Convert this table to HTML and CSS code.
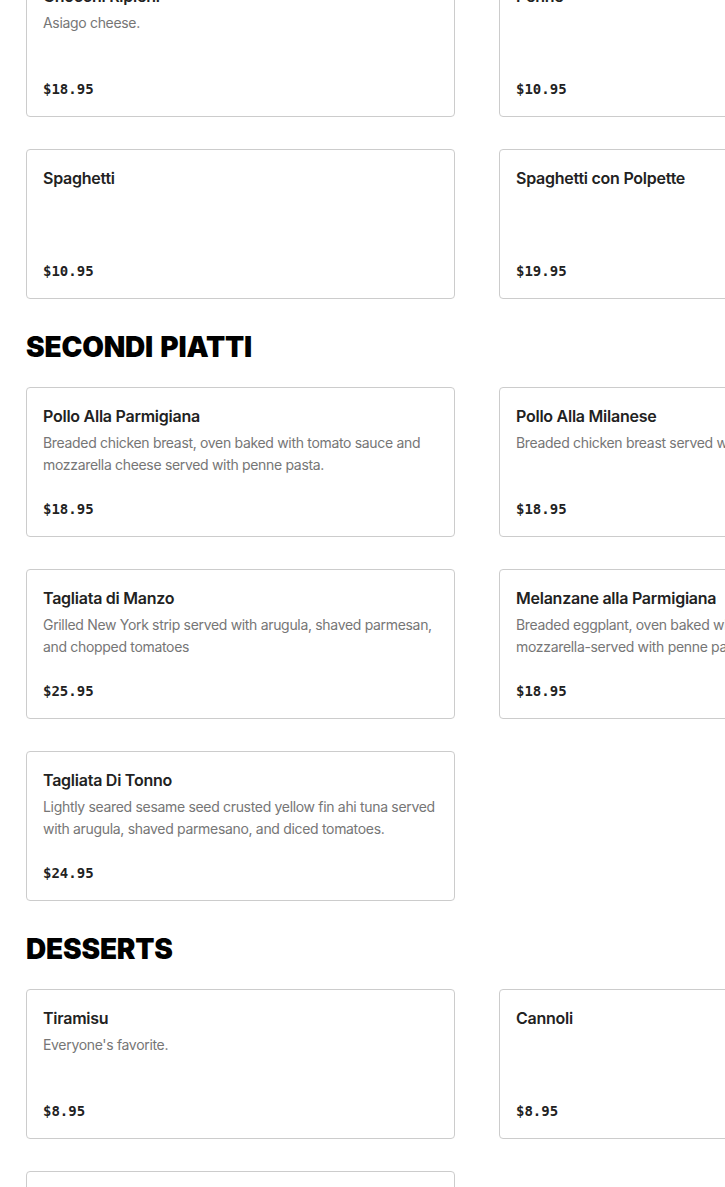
FILE: index.html
```html
<!DOCTYPE html>
<html lang="en">
<head>
<meta charset="utf-8">
<title>Menu</title>
<link rel="stylesheet" href="styles.css">
</head>
<body>
<main class="menu">
  <section class="section section-first">
    <div class="grid">
      <article class="card">
        <h3 class="card-title">Gnocchi Ripieni</h3>
        <p class="card-desc">Asiago cheese.</p>
        <div class="card-price">$18.95</div>
      </article>
      <article class="card">
        <h3 class="card-title">Penne</h3>
        <div class="card-price">$10.95</div>
      </article>
      <article class="card">
        <h3 class="card-title">Spaghetti</h3>
        <div class="card-price">$10.95</div>
      </article>
      <article class="card">
        <h3 class="card-title">Spaghetti con Polpette</h3>
        <div class="card-price">$19.95</div>
      </article>
    </div>
  </section>

  <section class="section">
    <h2 class="section-title">SECONDI PIATTI</h2>
    <div class="grid">
      <article class="card">
        <h3 class="card-title">Pollo Alla Parmigiana</h3>
        <p class="card-desc">Breaded chicken breast, oven baked with tomato sauce and mozzarella cheese served with penne pasta.</p>
        <div class="card-price">$18.95</div>
      </article>
      <article class="card">
        <h3 class="card-title">Pollo Alla Milanese</h3>
        <p class="card-desc">Breaded chicken breast served with arugula and tomatoes.</p>
        <div class="card-price">$18.95</div>
      </article>
      <article class="card">
        <h3 class="card-title">Tagliata di Manzo</h3>
        <p class="card-desc">Grilled New York strip served with arugula, shaved parmesan, and chopped tomatoes</p>
        <div class="card-price">$25.95</div>
      </article>
      <article class="card">
        <h3 class="card-title">Melanzane alla Parmigiana</h3>
        <p class="card-desc">Breaded eggplant, oven baked with tomato sauce and mozzarella-served with penne pasta.</p>
        <div class="card-price">$18.95</div>
      </article>
      <article class="card">
        <h3 class="card-title">Tagliata Di Tonno</h3>
        <p class="card-desc">Lightly seared sesame seed crusted yellow fin ahi tuna served with arugula, shaved parmesano, and diced tomatoes.</p>
        <div class="card-price">$24.95</div>
      </article>
    </div>
  </section>

  <section class="section">
    <h2 class="section-title">DESSERTS</h2>
    <div class="grid">
      <article class="card">
        <h3 class="card-title">Tiramisu</h3>
        <p class="card-desc">Everyone's favorite.</p>
        <div class="card-price">$8.95</div>
      </article>
      <article class="card">
        <h3 class="card-title">Cannoli</h3>
        <div class="card-price">$8.95</div>
      </article>
      <article class="card">
        <h3 class="card-title">Gelato</h3>
        <div class="card-price">$7.95</div>
      </article>
    </div>
  </section>
</main>
</body>
</html>
```

FILE: styles.css
```css
html, body {
  margin: 0;
  padding: 0;
  overflow: hidden;
  background: #ffffff;
}

body {
  font-family: Inter, "Noto Sans", "Liberation Sans", sans-serif;
  color: #222222;
}

.menu {
  width: 902px;
  margin-top: -33px;
  padding-left: 26px;
}

.section {
  margin: 0;
}

.section-title {
  margin: 30px 0 22px;
  font-family: Inter, "Liberation Sans", sans-serif;
  font-weight: 900;
  font-size: 28px;
  line-height: 36px;
  letter-spacing: -0.2px;
  word-spacing: 2px;
  color: #000000;
}

.grid {
  display: grid;
  grid-template-columns: 429px 429px;
  column-gap: 44px;
  row-gap: 32px;
}

.card {
  box-sizing: border-box;
  height: 150px;
  border: 1px solid #cccccc;
  border-radius: 4px;
  padding: 16px;
  display: flex;
  flex-direction: column;
  background: #ffffff;
}

.card-title {
  margin: 0;
  font-size: 16px;
  font-weight: 600;
  line-height: 24px;
  letter-spacing: -0.25px;
  color: #222222;
}

.card-desc {
  margin: 4px 0 0;
  font-size: 14px;
  line-height: 22px;
  letter-spacing: -0.32px;
  color: #767676;
}

.card-price {
  margin-top: auto;
  font-family: "DejaVu Sans Mono", "Liberation Mono", monospace;
  font-weight: bold;
  font-size: 14px;
  line-height: 22px;
  color: #222222;
}
```
